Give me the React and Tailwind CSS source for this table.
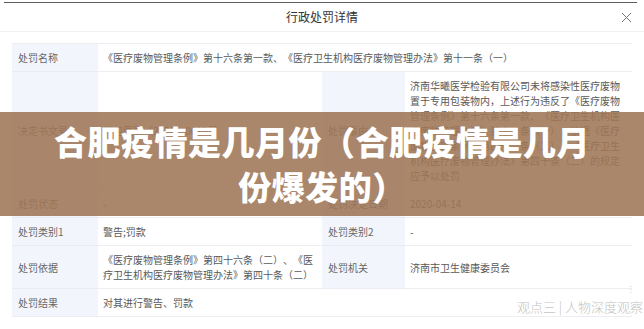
import React from "react";

const font = "font-['Noto_Sans_CJK_SC','Noto_Sans',sans-serif] [text-spacing-trim:space-all]";

function Label({ children, className = "" }) {
  return (
    <div className={`bg-[#f2f6fc] px-[6px] py-[6px] leading-[15px] text-[10px] text-[#666] border-b border-[#e9edf3] flex items-center ${className}`}>
      {children}
    </div>
  );
}

function Value({ children, className = "" }) {
  return (
    <div className={`bg-white px-[5px] py-[6px] leading-[15px] text-[10px] text-[#585858] border-b border-[#eceef2] flex items-center ${className}`}>
      <div>{children}</div>
    </div>
  );
}

export default function App() {
  return (
    <div className={`relative w-[644px] h-[329px] overflow-hidden bg-white ${font}`}>
      <div className="pt-[2px] pl-[4px] pr-[7px]">
        <div className="h-px bg-[#5e5e5e]" />
      </div>
      <div className="grid grid-cols-[1fr_auto_1fr] items-center h-[29px] border-b border-[#f1f1f1]">
        <div />
        <div className="text-[12px] text-[#333]">行政处罚详情</div>
        <div className="justify-self-end pr-[12px] flex items-center">
          <svg width="11" height="11" viewBox="0 0 11 11" fill="none" stroke="#777" strokeWidth="1">
            <path d="M1 1L10 10M10 1L1 10" />
          </svg>
        </div>
      </div>

      <div className="mt-[11px] mx-[12px] grid grid-cols-[86px_224px_83px_1fr] border-t border-[#eceef2]">
        <Label>处罚名称</Label>
        <Value className="col-span-3">
          《医疗废物管理条例》第十六条第一款、《医疗卫生机构医疗废物管理办法》第十一条（一）
        </Value>

        <Label>决定书文号</Label>
        <Value>济卫医罚〔2020〕0013号</Value>
        <Label>处罚事由</Label>
        <Value>
          济南华曦医学检验有限公司未将感染性医疗废物
          <br />
          置于专用包装物内，上述行为违反了《医疗废物
          <br />
          管理条例》第十六条第一款、《医疗卫生机构医
          <br />
          疗废物管理办法》第十一条（一），依据《医疗
          <br />
          废物管理条例》第四十六条（二）、《医疗卫生
          <br />
          机构医疗废物管理办法》第四十条（二）的规定
          <br />
          应予以处罚
        </Value>

        <Label>处罚状态</Label>
        <Value>-</Value>
        <Label>处罚决定日期</Label>
        <Value>2020-04-14</Value>

        <Label>处罚类别1</Label>
        <Value>警告;罚款</Value>
        <Label>处罚类别2</Label>
        <Value>-</Value>

        <Label>处罚依据</Label>
        <Value>
          《医疗废物管理条例》第四十六条（二）、《医
          <br />
          疗卫生机构医疗废物管理办法》第四十条（二）
        </Value>
        <Label>处罚机关</Label>
        <Value>济南市卫生健康委员会</Value>

        <Label>处罚结果</Label>
        <Value className="col-span-3">对其进行警告、罚款</Value>
      </div>

      <div className="absolute left-0 right-0 top-[112px] h-[104px] bg-[rgba(158,118,86,0.88)] flex items-center justify-center">
        <div className="text-white text-[33px] leading-[45px] font-black text-center tracking-[0.5px]">
          合肥疫情是几月份（合肥疫情是几月
          <br />
          份爆发的）
        </div>
      </div>

      <div className="absolute right-[12px] top-[286px] text-[8px] leading-none text-[#c9c9c9]">⁝</div>
      <div className="absolute right-[1px] top-[298px] text-[13px] leading-[18px] text-[#c4c4c4] font-light whitespace-nowrap">
        观点三 | 人物深度观察
      </div>
    </div>
  );
}
